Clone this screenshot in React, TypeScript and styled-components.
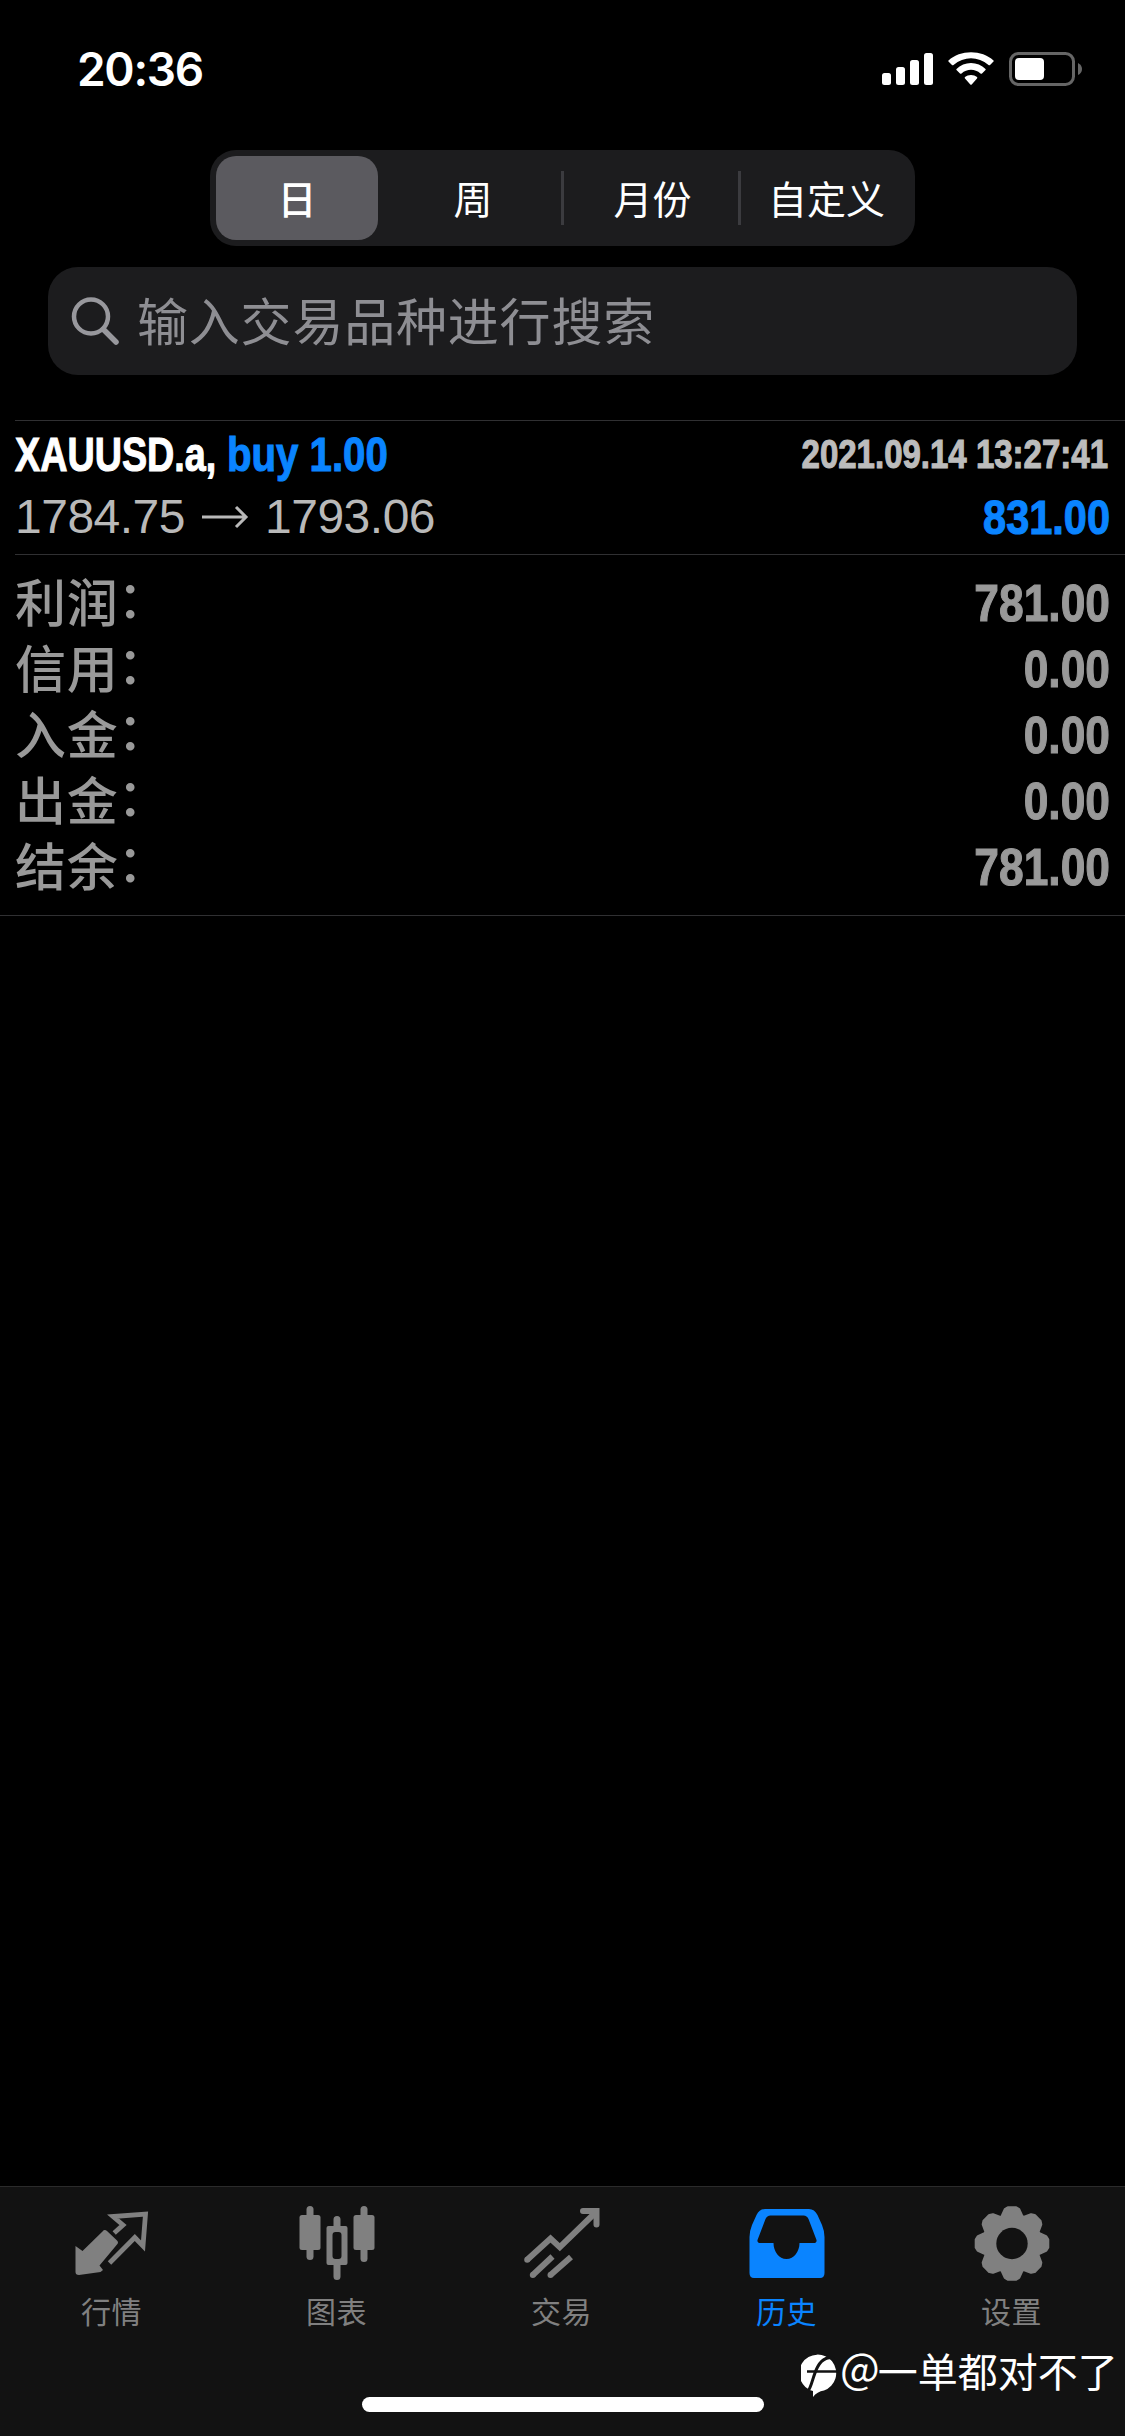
import React from 'react';
import styled, { createGlobalStyle } from 'styled-components';

const latin = `'Liberation Sans', 'Noto Sans CJK SC', sans-serif`;
const Global = createGlobalStyle`
  html, body { margin: 0; background: #000; }
  * { box-sizing: border-box; }
`;

const Screen = styled.div`
  width: 1125px; height: 2436px; background: #000; color: #fff; overflow: hidden;
  display: flex; flex-direction: column; position: relative;
  font-family: ${latin};
`;
const StatusBar = styled.header`
  height: 150px; flex: none; display: flex; justify-content: space-between;
  padding: 40px 42px 0 77px;
`;
const Clock = styled.div`
  font: 600 46px/58px Inter, sans-serif; letter-spacing: -1.3px; height: 58px;
`;
const StatusIcons = styled.svg`width: 204px; height: 40px; margin-top: 10px;`;

const Segments = styled.nav`
  width: 705px; height: 96px; flex: none; margin: 0 0 21px 210px; padding: 6px 0 6px 6px;
  border-radius: 26px; background: #1c1c1e; display: flex; align-items: center;
`;
const Segment = styled.div<{ $active?: boolean; $width: number; $pad?: string }>`
  width: ${p => p.$width}px; height: 84px; border-radius: 20px; display: flex; align-items: center; justify-content: center;
  background: ${p => (p.$active ? '#5b5a5f' : 'transparent')};
  font: ${p => (p.$active ? 500 : 400)} 39px/58px 'Noto Sans CJK SC', sans-serif;
  padding: ${p => p.$pad ?? '0 0 3px'};
`;
const Divider = styled.i<{ $shown?: boolean }>`
  width: 3px; height: 54px; background: ${p => (p.$shown ? '#3b3b3f' : 'transparent')};
`;

const Search = styled.div`
  width: 1029px; height: 108px; flex: none; margin-left: 48px; padding-left: 23px; border-radius: 30px;
  background: #1c1c1e; display: flex; align-items: center; gap: 16px;
`;
const SearchIcon = styled.svg`width: 50px; height: 54px;`;
const Placeholder = styled.span`
  font: 400 51px/74px 'Noto Sans CJK SC', sans-serif; letter-spacing: 0.8px; color: #8e8e93;
  margin-top: -4px;
`;

const Deal = styled.section`
  height: 135px; flex: none; margin: 45px 0 0 15px; padding: 1px 15px 0 0;
  border-top: 1px solid #303032; border-bottom: 1px solid #303032;
`;
const DealRow = styled.div<{ $h: number }>`
  display: flex; justify-content: space-between; height: ${p => p.$h}px; align-items: center;
`;
const DealName = styled.div`display: flex;`;
const Condensed = styled.span<{ $size: number; $scale: number; $width: number; $color: string; $right?: boolean; $inset?: number }>`
  display: flex; justify-content: ${p => (p.$right ? 'flex-end' : 'flex-start')};
  width: ${p => p.$width}px; white-space: pre; font-weight: 700; font-size: ${p => p.$size}px; line-height: 58px;
  margin-right: ${p => p.$inset ?? 0}px; -webkit-text-stroke: 1.1px currentColor;
  color: ${p => p.$color}; transform: scaleX(${p => p.$scale}); transform-origin: ${p => (p.$right ? 'right' : 'left')} center;
`;
const Prices = styled.div`
  display: flex; align-items: center; gap: 16px; font-size: 48px; line-height: 58px; color: #b9b9b9; letter-spacing: -0.5px;
`;
const Arrow = styled.svg`width: 48px; height: 24px;`;

const Summary = styled.section`
  height: 361px; flex: none; padding: 15px 15px 0; border-bottom: 1px solid #303032; display: flex; flex-direction: column;
`;
const SummaryRow = styled.div`display: flex; justify-content: space-between; align-items: center; height: 66px;`;
const SummaryLabel = styled.span`
  font: 500 51px/62px ${latin}; letter-spacing: 0.7px; color: #999; margin-top: 4px;
`;
const Colon = styled.span`display: inline-block; margin-left: -1px; transform: translateY(-4px);`;
const Space = styled.div`flex: 1;`;

const TabBar = styled.footer`
  height: 250px; flex: none; background: #121212; border-top: 1px solid #2b2b2b; display: flex;
`;
const Tab = styled.div<{ $active?: boolean }>`
  width: 225px; display: flex; flex-direction: column; align-items: center; padding: 14px 2px 0 0;
  color: ${p => (p.$active ? '#0a84ff' : '#808080')};
`;
const TabIcon = styled.svg`width: 84px; height: 80px; fill: currentColor; stroke: none;`;
const TabLabel = styled.span`
  font: 400 30px/44px 'Noto Sans CJK SC', sans-serif; letter-spacing: 0.6px; margin-top: 7px;
`;
const HomeIndicator = styled.div`
  position: absolute; left: 362px; top: 2397px; width: 402px; height: 15px; border-radius: 8px; background: #fff;
`;
const Watermark = styled.div`
  position: absolute; left: 801px; top: 2340px; display: flex; align-items: center; color: #fff;
  font: 400 40px/58px 'Noto Sans CJK SC', sans-serif;
`;
const MarkLogo = styled.svg`width: 40px; height: 46px; margin-top: 13px;`;
const At = styled.span`font-size: 42px; line-height: 50px; margin: 0 -2px 0 -1px; padding-bottom: 7px;`;

const rows = [['利润', '781.00'], ['信用', '0.00'], ['入金', '0.00'], ['出金', '0.00'], ['结余', '781.00']];

/* Every tab drawing uses an 84 x 80 canvas. */
const gear = (() => {
  const pts: string[] = [];
  for (let i = 0; i < 8; i++) {
    const base = (i * Math.PI) / 4 - Math.PI / 2;
    [[-0.36, 28.6], [-0.2, 34.6], [-0.11, 36], [0.11, 36], [0.2, 34.6], [0.36, 28.6]].forEach(([a, r]) => {
      pts.push(`${(42 + r * Math.cos(base + a)).toFixed(1)} ${(42.5 + r * Math.sin(base + a)).toFixed(1)}`);
    });
  }
  return `M${pts.join('L')}Z`;
})();

const QuotesIcon = () => (
  <TabIcon viewBox="0 0 84 80">
    <path d="M32.500 30.500Q34.500 28 37 30L47 39.500Q49 41.500 47 43.500L29.500 64.500L33 69L30.500 71L9 74Q5.500 74 5.500 71V45L12.500 50Z" />
    <path d="M44.200 32L53 24L43 15.500L75.500 13L73 45L64.800 36.500L39.500 62" fill="none" stroke="currentColor" strokeWidth="4.800" />
  </TabIcon>
);
const ChartIcon = () => (
  <TabIcon viewBox="0 0 84 80">
    <g transform="translate(1 0)">
      <rect x="3.500" y="14" width="21" height="35" rx="2.500" /><rect x="10.500" y="5" width="7" height="54" rx="3.500" />
      <rect x="57.500" y="14" width="21" height="35" rx="2.500" /><rect x="64.500" y="5" width="7" height="56" rx="3.500" />
      <path fillRule="evenodd" d="M32.500 25H49.500Q51.500 25 51.500 27V62Q51.500 64 49.500 64H32.500Q30.500 64 30.500 62V27Q30.500 25 32.500 25ZM39.500 31Q36.500 31 36.500 34V55Q36.500 58 39.500 58H42.500Q45.500 58 45.500 55V34Q45.500 31 42.500 31Z" />
      <path d="M37.500 26V18.500A3.500 3.500 0 0 1 44.500 18.500V26ZM37.500 63V75.500A3.500 3.500 0 0 0 44.500 75.500V63Z" />
    </g>
  </TabIcon>
);
const TradeIcon = () => (
  <TabIcon viewBox="0 0 84 80">
    <g fill="none" stroke="currentColor" strokeWidth="6">
      <path d="M7.200 58.700L30.500 37.500L39.800 46.200L75 12" />
      <path d="M63 10H76.500V23.500" strokeLinecap="round" />
      <path d="M12.800 74L32.500 55.500M30.500 74L51 56" />
    </g>
    <circle cx="7.200" cy="58.700" r="3" /><circle cx="12.800" cy="74" r="3" /><circle cx="30.500" cy="74" r="3" />
  </TabIcon>
);
const HistoryIcon = () => (
  <TabIcon viewBox="0 0 84 80">
    <path fillRule="evenodd" d="M20 8H64Q69.500 8 72.500 14L77 24Q79.500 30 79.500 36V72Q79.500 77 75 77H9Q4.500 77 4.500 72V36Q4.500 30 7 24L11.500 14Q14.500 8 20 8ZM25.500 14.500Q22 14.500 20.500 18L12.500 39Q12 42 15.500 42H28.500C28.500 50.500 34 58 41.500 58S54.500 50.500 54.500 42H68.500Q72 42 71.500 39L63.500 18Q62 14.500 58.500 14.500Z" />
  </TabIcon>
);
const SettingsIcon = () => (
  <TabIcon viewBox="0 0 84 80">
    <path d={gear} stroke="currentColor" strokeWidth="3" strokeLinejoin="round" />
    <circle cx="42" cy="42.500" r="15.700" fill="#121212" />
  </TabIcon>
);

const tabs = [
  { label: '行情', Icon: QuotesIcon }, { label: '图表', Icon: ChartIcon }, { label: '交易', Icon: TradeIcon },
  { label: '历史', Icon: HistoryIcon, active: true }, { label: '设置', Icon: SettingsIcon },
];

export default function App() {
  return (
    <Screen>
      <Global />
      <StatusBar>
        <Clock>20:36</Clock>
        <StatusIcons viewBox="0 0 204 40" fill="#fff">
          <rect x="3" y="23" width="9" height="12" rx="2.500" /><rect x="17" y="17" width="9" height="18" rx="2.500" />
          <rect x="31" y="10" width="9" height="25" rx="2.500" /><rect x="45" y="3" width="9" height="32" rx="2.500" />
          <path d="M69.500 10.500C81 -0.500 103 -0.500 114.500 10.500Q115 11 114.500 11.500L111 15Q110.300 15.500 109.500 15C99 6 85 6 74.500 15Q73.700 15.500 73 15L69.500 11.500Q69 11 69.500 10.500Z" />
          <path d="M77.500 19C85 11 99 11 106.500 19Q107 19.500 106.500 20L103 23.500Q102.300 24 101.500 23.500C96 18.500 88 18.500 82.500 23.500Q81.700 24 81 23.500L77.500 20Q77 19.500 77.500 19Z" />
          <path d="M86 27C89 24.300 95 24.300 98 27Q98.700 27.800 98 28.500L92.700 34.500Q92 35.200 91.300 34.500L86 28.500Q85.300 27.800 86 27Z" />
          <rect x="131.500" y="3.500" width="63" height="31" rx="8" fill="none" stroke="#666" strokeWidth="3" />
          <rect x="136" y="8" width="29" height="22" rx="4" />
          <path d="M199 13Q203 15 203 19T199 25Z" fill="#666" />
        </StatusIcons>
      </StatusBar>
      <Segments>
        <Segment $active $width={162}>日</Segment><Divider />
        <Segment $width={180} $pad="0 0 3px 4px">周</Segment><Divider $shown />
        <Segment $width={174} $pad="0 0 3px 3px">月份</Segment><Divider $shown />
        <Segment $width={174} $pad="0 3px 3px 0">自定义</Segment>
      </Segments>
      <Search>
        <SearchIcon viewBox="0 0 50 54" fill="none" stroke="#98989d">
          <circle cx="20" cy="22.500" r="17" strokeWidth="4.500" /><path d="M32.500 35.500L45 48" strokeWidth="5.500" strokeLinecap="round" />
        </SearchIcon>
        <Placeholder>输入交易品种进行搜索</Placeholder>
      </Search>
      <Deal>
        <DealRow $h={63}>
          <DealName>
            <Condensed $size={49} $scale={0.77} $width={212} $color="#fff">XAUUSD.a,</Condensed>
            <Condensed $size={49} $scale={0.82} $width={180} $color="#0a84ff">buy 1.00</Condensed>
          </DealName>
          <Condensed $size={40} $scale={0.825} $width={300} $color="#bcbcbc" $right $inset={2}>2021.09.14 13:27:41</Condensed>
        </DealRow>
        <DealRow $h={64}>
          <Prices>1784.75<Arrow viewBox="0 0 48 24" fill="none" stroke="#b9b9b9" strokeWidth="3"><path d="M1 12H45M35 2L45 12L35 22" /></Arrow>1793.06</Prices>
          <Condensed $size={49} $scale={0.847} $width={200} $color="#0a84ff" $right>831.00</Condensed>
        </DealRow>
      </Deal>
      <Summary>
        {rows.map(([label, value]) => (
          <SummaryRow key={label}>
            <SummaryLabel>{label}<Colon>：</Colon></SummaryLabel>
            <Condensed $size={52} $scale={0.853} $width={200} $color="#999" $right>{value}</Condensed>
          </SummaryRow>
        ))}
      </Summary>
      <Space />
      <TabBar>
        {tabs.map(({ label, Icon, active }) => (
          <Tab key={label} $active={active}><Icon /><TabLabel>{label}</TabLabel></Tab>
        ))}
      </TabBar>
      <HomeIndicator />
      <Watermark>
        <MarkLogo viewBox="0 0 40 46">
          <path d="M12 44V38A18.500 18.500 0 1 1 23 37.500Q16 38.500 12 44Z" fill="#fff" />
          <path d="M7 38C12 33 13 10 25 5.500Q29 4 33 6" fill="none" stroke="#121212" strokeWidth="3" />
          <path d="M6 18.500H38" fill="none" stroke="#121212" strokeWidth="2.500" />
        </MarkLogo>
        <At>@</At>一单都对不了
      </Watermark>
    </Screen>
  );
}
